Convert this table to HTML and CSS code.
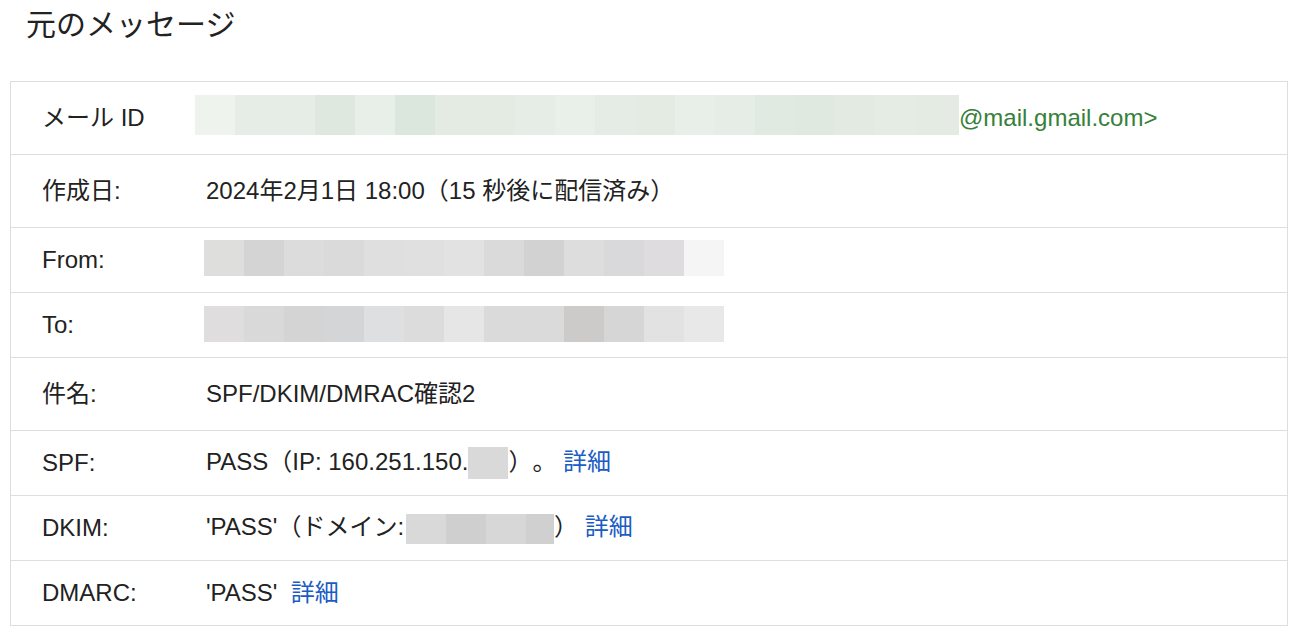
FILE: index.html
```html
<!DOCTYPE html>
<html lang="ja">
<head>
<meta charset="utf-8">
<title>元のメッセージ</title>
<link rel="stylesheet" href="styles.css">
</head>
<body>
<div class="page">
  <h1 class="title">元のメッセージ</h1>
  <div class="details">
    <div class="row row--tall">
      <div class="label">メール ID</div>
      <div class="value"><span class="bar bar-mail"></span><span class="mail-domain">@mail.gmail.com&gt;</span></div>
    </div>
    <div class="row row--tall">
      <div class="label">作成日:</div>
      <div class="value">2024年2月1日 18:00（15 秒後に配信済み）</div>
    </div>
    <div class="row">
      <div class="label">From:</div>
      <div class="value"><span class="bar bar-from"></span></div>
    </div>
    <div class="row">
      <div class="label">To:</div>
      <div class="value"><span class="bar bar-to"></span></div>
    </div>
    <div class="row row--tall">
      <div class="label">件名:</div>
      <div class="value">SPF/DKIM/DMRAC確認2</div>
    </div>
    <div class="row">
      <div class="label">SPF:</div>
      <div class="value">PASS（IP: 160.251.150.<span class="bar bar-ip"></span>）。 <a class="link" href="#">詳細</a></div>
    </div>
    <div class="row">
      <div class="label">DKIM:</div>
      <div class="value">'PASS'（ドメイン:<span class="bar bar-domain"></span>） <a class="link" href="#">詳細</a></div>
    </div>
    <div class="row">
      <div class="label">DMARC:</div>
      <div class="value">'PASS'&nbsp; <a class="link" href="#">詳細</a></div>
    </div>
  </div>
</div>
</body>
</html>
```

FILE: styles.css
```css
html, body {
  margin: 0;
  padding: 0;
  background: #ffffff;
}

body {
  font-family: "Liberation Sans", "Noto Sans CJK JP", sans-serif;
  color: #222222;
  text-spacing-trim: space-all;
}

.page {
  padding: 5px 11px 0 10px;
}

.title {
  margin: 0 0 36px 0;
  padding-left: 16px;
  font-size: 30px;
  font-weight: normal;
  line-height: 40px;
  color: #222222;
}

.details {
  border: 1px solid #dedede;
}

.row {
  display: flex;
  align-items: center;
  height: 64px;
  border-top: 1px solid #dedede;
  font-size: 24px;
  line-height: 30px;
}

.row:first-child {
  border-top: none;
}

.row--tall {
  height: 72px;
}

.label {
  flex: 0 0 164px;
  padding-left: 31px;
  white-space: nowrap;
}

.value {
  flex: 1 1 auto;
  white-space: nowrap;
}

.link {
  color: #1a5cc4;
  text-decoration: none;
}

.mail-domain {
  color: #37803a;
  vertical-align: middle;
}

.bar {
  display: inline-block;
  vertical-align: middle;
}

.bar-mail {
  width: 764px;
  height: 40px;
  margin-left: -11px;
  margin-bottom: 6px;
  background: linear-gradient(to right,
    #eef3ee 0 40px, #e6ede6 40px 80px, #e6ede6 80px 120px, #dfe8df 120px 160px,
    #e8efe8 160px 200px, #dbe6dc 200px 240px, #e3ebe3 240px 280px, #e3ebe3 280px 320px,
    #e6ede6 320px 360px, #e9f0e9 360px 400px, #e5ece5 400px 440px, #e3ebe3 440px 480px,
    #e8efe8 480px 520px, #e6ede6 520px 560px, #e1eae1 560px 600px, #e0e9e0 600px 640px,
    #e2eae2 640px 680px, #e4ece4 680px 720px, #e3ebe3 720px 764px);
}

.bar-from {
  width: 520px;
  height: 36px;
  margin-left: -2px;
  margin-bottom: 4px;
  background: linear-gradient(to right,
    #dededd 0 40px, #d4d4d4 40px 80px, #dcdcdc 80px 120px, #dadada 120px 160px,
    #dfdfdf 160px 200px, #dfe0df 200px 240px, #e2e2e2 240px 280px, #dadada 280px 320px,
    #d2d2d3 320px 360px, #dddddd 360px 400px, #d9d9db 400px 440px, #dedcde 440px 480px,
    #f5f5f5 480px 520px);
}

.bar-to {
  width: 520px;
  height: 36px;
  margin-left: -2px;
  margin-bottom: 3px;
  background: linear-gradient(to right,
    #dfdddd 0 40px, #d9d9d9 40px 80px, #d4d4d4 80px 120px, #d4d5d6 120px 160px,
    #dedfe0 160px 200px, #dcdcdc 200px 240px, #e6e6e6 240px 280px, #dadada 280px 320px,
    #dadada 320px 360px, #cccbc9 360px 400px, #d6d6d6 400px 440px, #e2e2e2 440px 480px,
    #e8e8e8 480px 520px);
}

.bar-ip {
  width: 40px;
  height: 32px;
  background: #d9d9d9;
}

.bar-domain {
  width: 148px;
  height: 30px;
  margin-left: 2px;
  background: linear-gradient(to right,
    #d9d9d9 0 40px, #cfcfcf 40px 80px, #d7d7d7 80px 120px, #d0d0d0 120px 148px);
}
```
